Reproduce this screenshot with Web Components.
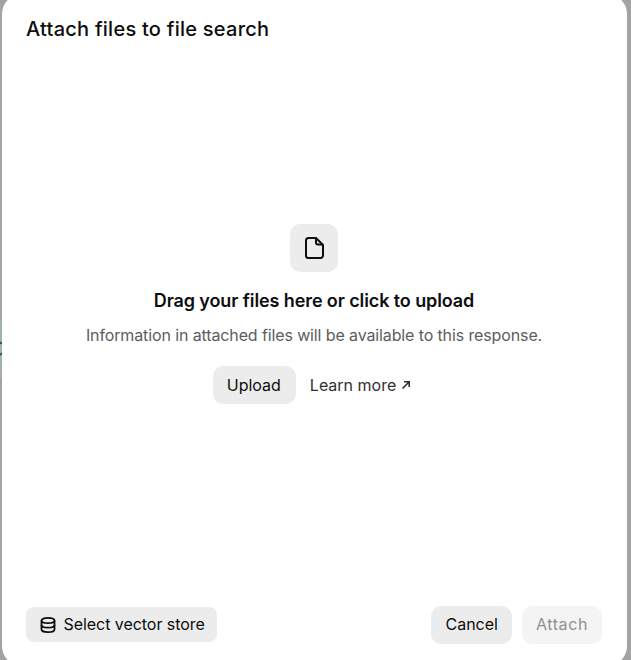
<!DOCTYPE html>
<html lang="en">
<head>
<meta charset="utf-8">
<title>Attach files to file search</title>
<style>
  html, body { margin: 0; height: 100%; overflow: hidden; background: #a3a3a3; }
  body { font-family: Inter, "Liberation Sans", sans-serif; color: #0d0d0d; }
</style>
</head>
<body>
<page-sliver></page-sliver>
<attach-dialog heading="Attach files to file search">
  <drop-zone
    heading="Drag your files here or click to upload"
    hint="Information in attached files will be available to this response."></drop-zone>
  <ui-button slot="footer-start">
    <svg slot="icon" width="20" height="20" viewBox="0 0 20 20" fill="none" stroke="currentColor" stroke-width="1.8">
      <path d="M3.5 5.5c0-1.6 2.9-2.7 6.5-2.7s6.5 1.1 6.5 2.7v9c0 1.6-2.9 2.7-6.5 2.7s-6.5-1.1-6.5-2.7z"/>
      <path d="M3.5 5.5c0 1.6 2.9 2.7 6.5 2.7s6.5-1.1 6.5-2.7"/>
      <path d="M3.5 10c0 1.6 2.9 2.7 6.5 2.7s6.5-1.1 6.5-2.7"/>
    </svg>
    Select vector store
  </ui-button>
  <ui-button slot="footer-end" size="large">Cancel</ui-button>
  <ui-button slot="footer-end" size="large" disabled>Attach</ui-button>
</attach-dialog>

<script>
const buttonTemplate = document.createElement('template');
buttonTemplate.innerHTML = `
  <style>
    :host {
      box-sizing: border-box;
      display: inline-flex;
      align-items: center;
      gap: 5.5px;
      height: 35px;
      padding: 0 12px;
      border-radius: 8px;
      background-color: #ececec;
      color: #0d0d0d;
      font-size: 16px;
      letter-spacing: -0.05px;
      white-space: nowrap;
      cursor: pointer;
    }
    :host([size="large"]) {
      height: 38px;
      padding: 0 14px;
      border-radius: 10px;
      letter-spacing: 0;
    }
    :host([disabled]) {
      background-color: #f4f4f4;
      color: #8f8f8f;
      letter-spacing: 0.6px;
      cursor: default;
    }
    ::slotted(svg) { flex: none; margin-top: 3px; }
  </style>
  <slot name="icon"></slot>
  <slot></slot>
`;

class UiButton extends HTMLElement {
  constructor() {
    super();
    this.attachShadow({ mode: 'open' }).appendChild(buttonTemplate.content.cloneNode(true));
  }
}

const dropZoneTemplate = document.createElement('template');
dropZoneTemplate.innerHTML = `
  <style>
    :host {
      display: flex;
      flex-direction: column;
      align-items: center;
      text-align: center;
    }
    .icon {
      display: flex;
      align-items: center;
      justify-content: center;
      width: 48px;
      height: 48px;
      border-radius: 10px;
      background-color: #ececec;
    }
    .title {
      margin-top: 18px;
      font-size: 18px;
      line-height: 22px;
      font-weight: 600;
      letter-spacing: -0.1px;
    }
    .hint {
      margin-top: 12px;
      font-size: 16px;
      line-height: 22px;
      letter-spacing: -0.12px;
      color: #5d5d5d;
    }
    .actions {
      display: flex;
      align-items: center;
      gap: 14px;
      margin: 20px 4px 0 0;
    }
    .learn {
      display: inline-flex;
      align-items: center;
      gap: 5px;
      font-size: 16px;
      color: #303030;
    }
  </style>
  <div class="icon">
    <svg width="24" height="24" viewBox="0 0 24 24" fill="none" stroke="#0d0d0d" stroke-width="2" stroke-linejoin="round">
      <path d="M6.5 2H14l7 7v10.5a2.5 2.5 0 0 1-2.5 2.5h-12A2.5 2.5 0 0 1 4 19.5v-15A2.5 2.5 0 0 1 6.5 2z"/>
      <path d="M14 2.5v4a2 2 0 0 0 2 2h4.5"/>
    </svg>
  </div>
  <div class="title"></div>
  <div class="hint"></div>
  <div class="actions">
    <ui-button size="large" style="padding-right: 15px">Upload</ui-button>
    <span class="learn">Learn more
      <svg width="10" height="10" viewBox="0 0 10 10" fill="none" stroke="currentColor" stroke-width="1.6">
        <path d="M1.5 8.5L8 2M3 1.8h5.2V7"/>
      </svg>
    </span>
  </div>
`;

class DropZone extends HTMLElement {
  constructor() {
    super();
    const shadowRoot = this.attachShadow({ mode: 'open' });
    shadowRoot.appendChild(dropZoneTemplate.content.cloneNode(true));
    shadowRoot.querySelector('.title').textContent = this.getAttribute('heading');
    shadowRoot.querySelector('.hint').textContent = this.getAttribute('hint');
  }
}

const dialogTemplate = document.createElement('template');
dialogTemplate.innerHTML = `
  <style>
    :host {
      position: relative;
      display: flex;
      flex-direction: column;
      box-sizing: border-box;
      height: 672px;
      margin: -6px 4px 0 2px;
      padding: 23px 25px 22px 24px;
      border-radius: 20px;
      background-color: #fff;
    }
    .title {
      font-size: 20px;
      line-height: 24px;
      font-weight: 500;
      letter-spacing: 0.25px;
    }
    .body {
      flex: 1;
      display: flex;
      flex-direction: column;
      justify-content: center;
      padding-bottom: 19px;
    }
    .footer {
      display: flex;
      justify-content: space-between;
      align-items: flex-start;
    }
    .end {
      display: flex;
      gap: 10px;
    }
    slot[name="footer-start"]::slotted(ui-button) { margin-top: 1px; padding-bottom: 2px; }
    slot[name="footer-end"]::slotted(ui-button) { padding-bottom: 2px; }
  </style>
  <div class="title"></div>
  <div class="body"><slot></slot></div>
  <div class="footer">
    <slot name="footer-start"></slot>
    <div class="end"><slot name="footer-end"></slot></div>
  </div>
`;

class AttachDialog extends HTMLElement {
  constructor() {
    super();
    const shadowRoot = this.attachShadow({ mode: 'open' });
    shadowRoot.appendChild(dialogTemplate.content.cloneNode(true));
    shadowRoot.querySelector('.title').textContent = this.getAttribute('heading');
  }
}

// the bit of the page behind the dialog that still shows at the left edge
class PageSliver extends HTMLElement {
  constructor() {
    super();
    this.attachShadow({ mode: 'open' }).innerHTML = `
      <style>
        :host {
          position: absolute;
          left: 0;
          top: 320px;
          width: 2px;
          height: 58px;
          background-color: #a3b1ae;
        }
        svg { display: block; }
      </style>
      <svg width="2" height="58" viewBox="0 0 2 58" fill="none" stroke="#2a2f2e" stroke-width="1.4">
        <path d="M0 22L2 24M0 35L2 33"/>
      </svg>
    `;
  }
}

customElements.define('ui-button', UiButton);
customElements.define('drop-zone', DropZone);
customElements.define('attach-dialog', AttachDialog);
customElements.define('page-sliver', PageSliver);
</script>
</body>
</html>
